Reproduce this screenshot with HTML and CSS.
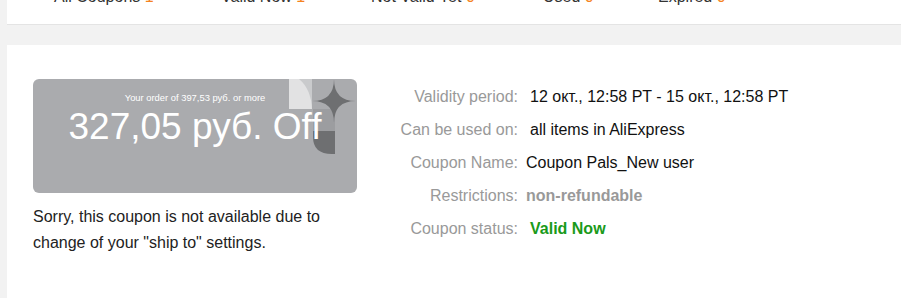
FILE: index.html
```html
<!DOCTYPE html>
<html>
<head>
<meta charset="utf-8">
<link rel="stylesheet" href="styles.css">
</head>
<body>
<div class="page">
  <div class="tabs-panel">
    <div class="tabs">
      <span class="tab t1">All Coupons <b class="num">1</b></span>
      <span class="tab t2">Valid Now <b class="num">1</b></span>
      <span class="tab t3">Not Valid Yet <b class="num">0</b></span>
      <span class="tab t4">Used <b class="num">0</b></span>
      <span class="tab t5">Expired <b class="num">0</b></span>
    </div>
  </div>
  <div class="coupon-panel">
    <div class="left">
      <div class="card">
        <svg class="deco" width="70" height="80" viewBox="0 0 70 80">
          <rect x="1" y="0" width="23" height="30" fill="#c9cacc"/>
          <path d="M1 0 H11 Q23 10 24 30 H1 Z" fill="#e2e2e3"/>
          <rect x="25" y="30" width="22" height="22" fill="#9c9da0"/>
          <path d="M46 0 Q46 22 68 22 Q46 22 46 44 Q46 22 24 22 Q46 22 46 0 Z" fill="#6e6f71"/>
          <path d="M25 52 H47 V75 H44 Q25 75 25 58 Z" fill="#6e6f71"/>
        </svg>
        <div class="min-order">Your order of 397,53 руб. or more</div>
        <div class="amount">327,05 руб. Off</div>
      </div>
      <p class="notice">Sorry, this coupon is not available due to change of your "ship to" settings.</p>
    </div>
    <div class="details">
      <div class="label">Validity period:</div><div class="value indent">12 окт., 12:58 PT - 15 окт., 12:58 PT</div>
      <div class="label">Can be used on:</div><div class="value indent">all items in AliExpress</div>
      <div class="label">Coupon Name:</div><div class="value">Coupon Pals_New user</div>
      <div class="label">Restrictions:</div><div class="value muted">non-refundable</div>
      <div class="label">Coupon status:</div><div class="value indent valid">Valid Now</div>
    </div>
  </div>
</div>
</body>
</html>
```

FILE: styles.css
```css
html, body {
  margin: 0;
  padding: 0;
  background: #f2f2f2;
  font-family: "Liberation Sans", Arial, sans-serif;
  overflow: hidden;
}
.page {
  padding-left: 7px;
}
.tabs-panel {
  background: #fff;
  height: 24px;
  border-bottom: 1px solid #e4e4e4;
  overflow: hidden;
}
.tabs {
  display: flex;
  margin-top: -13px;
  padding-left: 47px;
  font-size: 16px;
  line-height: 20px;
  color: #333;
  white-space: nowrap;
}
.tab {
  flex: none;
}
.tab .num {
  font-weight: normal;
  color: #f58220;
}
.t1 { width: 167px; }
.t2 { width: 150px; }
.t3 { width: 172px; }
.t4 { width: 115px; }

.coupon-panel {
  margin-top: 20px;
  background: #fff;
  height: 260px;
  display: flex;
  padding: 34px 0 0 26px;
  box-sizing: border-box;
}
.left {
  width: 324px;
}
.card {
  position: relative;
  width: 324px;
  height: 114px;
  background: #aaabae;
  border-radius: 6px;
  overflow: hidden;
  color: #fff;
  text-align: center;
}
.deco {
  position: absolute;
  left: 255px;
  top: 0;
}
.min-order {
  position: relative;
  padding-top: 13px;
  font-size: 9.4px;
  line-height: 11px;
}
.amount {
  position: relative;
  font-size: 37px;
  line-height: 42px;
  margin-top: 3px;
}
.notice {
  margin: 11px 0 0;
  font-size: 16px;
  line-height: 26px;
  color: #222;
  width: 300px;
}
.details {
  margin-left: 33px;
  margin-top: 1px;
  display: grid;
  grid-template-columns: 128px auto;
  grid-auto-rows: 33px;
  column-gap: 8px;
  align-items: center;
  font-size: 16px;
  align-self: flex-start;
}
.label {
  text-align: right;
  color: #999;
}
.value {
  color: #111;
}
.value.indent {
  padding-left: 4px;
}
.value.muted {
  color: #999;
  font-weight: bold;
}
.value.valid {
  color: #1a9a1a;
  font-weight: bold;
}
```
